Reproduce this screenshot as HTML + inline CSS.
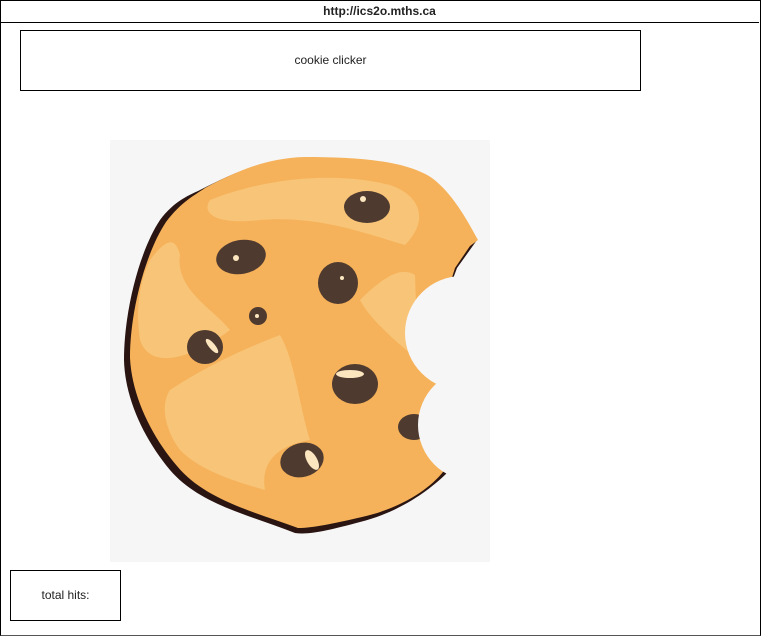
<!DOCTYPE html>
<html><head><meta charset="utf-8"><style>
html,body{margin:0;padding:0;width:761px;height:637px;overflow:hidden;background:#fff;font-family:"Liberation Sans",Arial,sans-serif;}
.frame{position:absolute;left:0;top:0;width:759px;height:634px;border:1px solid #000;border-bottom-color:#555;}
.hdr{position:absolute;left:0;top:0;width:759px;height:22px;border-bottom:1px solid #000;text-align:center;font-size:12px;font-weight:bold;line-height:23px;color:#222;}
.box{position:absolute;border:1px solid #000;text-align:center;font-size:12px;color:#222;}
</style></head><body>
<div class="frame"></div>
<div class="hdr">http://ics2o.mths.ca</div>
<div class="box" style="left:20px;top:30px;width:619px;height:59px;line-height:59px;">cookie clicker</div>
<div class="box" style="left:10px;top:570px;width:109px;height:49px;line-height:49px;">total hits:</div>
<svg style="position:absolute;left:0;top:0" width="761" height="637">
<defs>
<mask id="m">
<rect x="0" y="0" width="761" height="637" fill="#fff"/>
<circle cx="462" cy="333" r="57" fill="#000"/>
<circle cx="474" cy="425" r="56" fill="#000"/>
</mask>
</defs>
<rect x="110" y="140" width="380" height="422" fill="#f6f6f6"/>
<g mask="url(#m)">
<path d="M200,190 C230,175 260,160 300,158 C350,158 400,160 430,180 C450,195 465,220 477,240 L457,268 L445,300 L448,472 C430,490 400,512 360,522 C330,530 310,535 295,533 C250,515 200,505 170,470 C145,440 125,400 124,360 C124,310 140,250 160,220 C175,200 190,195 200,190 Z" fill="#2a1512"/>
<path d="M205,188 C235,172 265,158 305,157 C355,157 405,160 432,178 C452,193 466,218 478,240 L470,246 L455,268 L445,300 L446,468 C432,488 402,508 362,517 C332,524 312,528 298,528 C255,512 205,500 177,466 C153,438 132,398 130,358 C130,310 146,252 166,222 C181,202 195,195 205,188 Z" fill="#f5b25a"/>
<path d="M210,200 C260,180 330,170 390,185 C420,195 430,220 405,245 C370,235 320,215 260,220 C220,225 200,215 210,200 Z" fill="#f8c477"/>
<path d="M150,260 C165,240 175,235 180,255 C175,290 215,310 230,330 C190,360 150,370 140,340 C135,310 140,280 150,260 Z" fill="#f8c477"/>
<path d="M170,390 C200,370 240,350 280,335 C295,360 300,410 310,440 C280,445 260,460 265,490 C230,480 200,470 180,450 C165,430 160,405 170,390 Z" fill="#f8c477"/>
<path d="M360,300 C380,280 400,265 415,275 L418,360 C400,345 370,320 360,300 Z" fill="#f8c477"/>
<g fill="#4f3a30">
<ellipse cx="367" cy="207" rx="23" ry="16"/>
<ellipse cx="241" cy="257" rx="25" ry="17" transform="rotate(-10 241 257)"/>
<ellipse cx="338" cy="283" rx="20" ry="21"/>
<circle cx="258" cy="316" r="9"/>
<ellipse cx="205" cy="347" rx="18" ry="17"/>
<ellipse cx="355" cy="384" rx="23" ry="20"/>
<ellipse cx="414" cy="427" rx="16" ry="13"/>
<ellipse cx="302" cy="460" rx="22" ry="17" transform="rotate(-15 302 460)"/>
</g>
<g fill="#fbe6c0">
<ellipse cx="350" cy="374" rx="14" ry="4"/>
<ellipse cx="212" cy="346" rx="3" ry="9" transform="rotate(-40 212 346)"/>
<ellipse cx="312" cy="460" rx="5" ry="11" transform="rotate(-30 312 460)"/>
<circle cx="236" cy="258" r="3"/>
<circle cx="363" cy="199" r="3"/>
<circle cx="342" cy="278" r="2"/>
<circle cx="257" cy="316" r="2"/>
</g>
</g>
</svg>
</body></html>
